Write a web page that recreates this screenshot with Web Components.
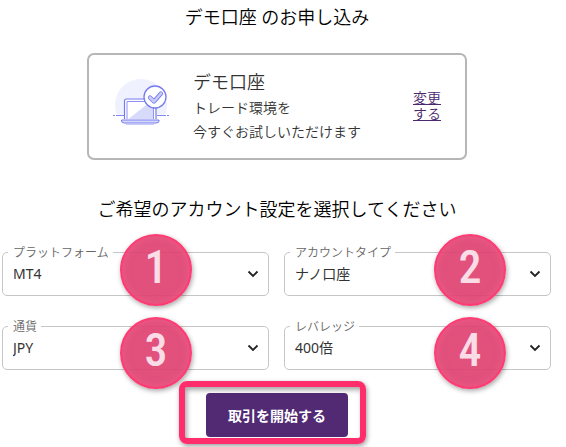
<!DOCTYPE html>
<html lang="ja">
<head>
<meta charset="utf-8">
<meta name="viewport" content="width=device-width, initial-scale=1">
<title>デモ口座 のお申し込み</title>
<style>
  body {
    margin: 0 14px 0 2px;
    background-color: #fff;
    color: #000;
    font-family: "Noto Sans", "Noto Sans CJK JP", sans-serif;
    font-weight: 350;
  }
</style>
</head>
<body>
  <demo-application>
    <span slot="title">デモ口座 のお申し込み</span>
    <account-card slot="account">
      <span slot="title">デモ口座</span>
      トレード環境を<br>今すぐお試しいただけます
      <span slot="action">変更する</span>
    </account-card>
    <span slot="subtitle">ご希望のアカウント設定を選択してください</span>
    <select-field label="プラットフォーム" options="MT4,MT5">
      <step-marker>1</step-marker>
    </select-field>
    <select-field class="right" label="アカウントタイプ" options="ナノ口座,マイクロ口座">
      <step-marker>2</step-marker>
    </select-field>
    <select-field class="lower" label="通貨" options="JPY,USD,EUR">
      <step-marker>3</step-marker>
    </select-field>
    <select-field class="right lower" label="レバレッジ" options="400倍,200倍,100倍">
      <step-marker>4</step-marker>
    </select-field>
    <start-button slot="submit">取引を開始する</start-button>
  </demo-application>

<script>
class BaseElement extends HTMLElement {
  constructor() {
    super();
    this.attachShadow({ mode: 'open' });
  }

  connectedCallback() {
    if (this.shadowRoot.childNodes.length) return;
    const template = document.createElement('template');
    template.innerHTML = this.getStyles() + this.getTemplate();
    this.shadowRoot.appendChild(template.content.cloneNode(true));
  }
}

class DemoApplication extends BaseElement {
  getTemplate() {
    return `
      <main>
        <h1><slot name="title"></slot></h1>
        <slot name="account"></slot>
        <h2><slot name="subtitle"></slot></h2>
        <form>
          <div class="fields"><slot></slot></div>
          <slot name="submit"></slot>
        </form>
      </main>
    `;
  }

  getStyles() {
    return `
      <style>
        :host {
          display: block;
        }

        main {
          display: flex;
          flex-direction: column;
          align-items: center;
          padding: 4px 0 10px;
        }

        h1, h2 {
          margin: 0;
          font-size: 18px;
          font-weight: inherit;
          line-height: 26px;
          text-align: center;
        }

        h1 {
          margin-bottom: 23px;
        }

        h2 {
          margin: 36px 0 22px;
        }

        form {
          display: flex;
          flex-direction: column;
          align-items: center;
          gap: 23px;
          width: 100%;
        }

        .fields {
          display: grid;
          grid-template-columns: 1fr 1fr;
          gap: 22px 15px;
          box-sizing: border-box;
          width: 100%;
          padding-right: 1px;
        }
      </style>
    `;
  }
}

class AccountCard extends BaseElement {
  getTemplate() {
    return `
      <laptop-icon></laptop-icon>
      <div class="text">
        <h3><slot name="title"></slot></h3>
        <p><slot></slot></p>
      </div>
      <a href="#"><slot name="action"></slot></a>
    `;
  }

  getStyles() {
    return `
      <style>
        :host {
          display: flex;
          align-items: center;
          box-sizing: border-box;
          width: 100%;
          max-width: 380px;
          padding: 13px 24px 14px;
          border: 2px solid #b6b6b6;
          border-radius: 7px;
          color: #333;
        }

        .text {
          flex: 1;
          margin-left: 22px;
        }

        h3 {
          margin: 0;
          font-size: 18px;
          font-weight: inherit;
          line-height: 28px;
        }

        p {
          margin: 0;
          font-size: 14px;
          line-height: 24px;
        }

        a {
          width: 28px;
          color: #4b286d;
          font-size: 14px;
          line-height: 16px;
        }
      </style>
    `;
  }
}

class LaptopIcon extends BaseElement {
  getTemplate() {
    return `
      <svg viewBox="0 0 58 56" width="58" height="56" fill="none" aria-hidden="true">
        <path d="M3.800 36.500A26 26 0 1 1 52.200 36.500Z" fill="#f0f1ff"/>
        <path d="M0 37.500h2M3 37.500h9M44 37.500h9M54 37.500h2" stroke="#8489f0"/>
        <path d="M11.500 41V23a2 2 0 0 1 2-2H41a2 2 0 0 1 2 2v18" fill="#fff" stroke="#767bee" stroke-width="1.200"/>
        <path d="M14 41V23.500h26.500V41" fill="#fff" stroke="#8f93f2"/>
        <path d="M15.500 41 37 24h3v17Z" fill="#d8dafc"/>
        <path d="M8.500 42H46v1q0 2-3 2H11.500q-3 0-3-2Z" fill="#d8dafc" stroke="#767bee"/>
        <path d="M13 46.500h28" stroke="#c9ccfb"/>
        <circle cx="42" cy="19" r="11" fill="#fff" stroke="#767bee" stroke-width="1.300"/>
        <path d="m37 19.500 4 4 7-8" stroke="#767bee" stroke-width="4.200" stroke-linecap="round" stroke-linejoin="round"/>
        <path d="m37 19.500 4 4 7-8" stroke="#c9ccfb" stroke-width="2.600" stroke-linecap="round" stroke-linejoin="round"/>
      </svg>
    `;
  }

  getStyles() {
    return `
      <style>
        :host {
          display: block;
        }

        svg {
          display: block;
        }
      </style>
    `;
  }
}

class SelectField extends BaseElement {
  getTemplate() {
    const options = this.getAttribute('options').split(',');

    return `
      <fieldset>
        <legend><label for="choice">${this.getAttribute('label')}</label></legend>
        <div class="control">
          <select id="choice">
            ${options.map((option) => `<option>${option}</option>`).join('')}
          </select>
          <svg viewBox="0 0 12 8" width="12" height="8" aria-hidden="true">
            <path d="M1.500 1.500 6 6l4.500-4.500" fill="none" stroke="#222" stroke-width="1.800"/>
          </svg>
        </div>
      </fieldset>
      <slot></slot>
    `;
  }

  getStyles() {
    return `
      <style>
        :host {
          --marker-left: 118px;
          --marker-top: -10px;
          display: block;
          position: relative;
        }

        :host(.right) {
          --marker-left: 150px;
        }

        :host(.lower) {
          --marker-top: -1px;
        }

        fieldset {
          min-width: 0;
          margin: 0;
          padding: 0 5px;
          border: 1px solid #c6c6c6;
          border-radius: 5px;
        }

        legend {
          padding: 2px 4px 0 5px;
          color: #666;
          font-size: 12px;
          line-height: 14px;
        }

        label {
          display: block;
        }

        .control {
          display: grid;
          align-items: center;
          height: 35px;
          padding-bottom: 8px;
          box-sizing: border-box;
        }

        select, svg {
          grid-area: 1 / 1;
        }

        svg {
          justify-self: end;
          margin-right: 4px;
          pointer-events: none;
        }

        select {
          appearance: none;
          width: 100%;
          height: 27px;
          margin: 0;
          padding: 0 24px 0 5px;
          border: 0;
          background: none;
          color: #333;
          font: inherit;
          font-size: 14px;
          font-weight: 400;
        }
      </style>
    `;
  }
}

class StepMarker extends BaseElement {
  getTemplate() {
    return `<slot></slot>`;
  }

  getStyles() {
    return `
      <style>
        :host {
          display: flex;
          align-items: center;
          justify-content: center;
          position: absolute;
          top: var(--marker-top);
          left: var(--marker-left);
          box-sizing: border-box;
          width: 72px;
          height: 72px;
          padding-bottom: 6px;
          border: 2px solid #ff3b74;
          border-radius: 50%;
          background-color: rgba(222, 62, 110, .9);
          box-shadow: 1px 2px 5px rgba(0, 0, 0, .35), inset 0 0 9px rgba(255, 100, 150, .5);
          color: #fadce7;
          font-family: "Roboto Condensed", "Liberation Sans Narrow", Roboto, sans-serif;
          font-size: 46px;
          font-weight: 500;
          line-height: 48px;
          pointer-events: none;
        }
      </style>
    `;
  }
}

class StartButton extends BaseElement {
  getTemplate() {
    return `<button type="button"><slot></slot></button>`;
  }

  getStyles() {
    return `
      <style>
        :host {
          display: block;
          position: relative;
        }

        /* highlight frame drawn over the button */
        :host::after {
          content: "";
          position: absolute;
          inset: -12px -18px -7px -27px;
          border: 6px solid #ff2d6b;
          border-radius: 8px;
          box-shadow: 1px 2px 5px rgba(0, 0, 0, .4), inset 2px 3px 5px rgba(0, 0, 0, .35);
          pointer-events: none;
        }

        button {
          display: block;
          height: 44px;
          padding: 0 22px;
          border: 0;
          border-radius: 4px;
          background-color: #522a74;
          color: #fff;
          font: inherit;
          font-size: 14px;
          font-weight: 700;
        }
      </style>
    `;
  }
}

customElements.define('demo-application', DemoApplication);
customElements.define('account-card', AccountCard);
customElements.define('laptop-icon', LaptopIcon);
customElements.define('select-field', SelectField);
customElements.define('step-marker', StepMarker);
customElements.define('start-button', StartButton);
</script>
</body>
</html>
